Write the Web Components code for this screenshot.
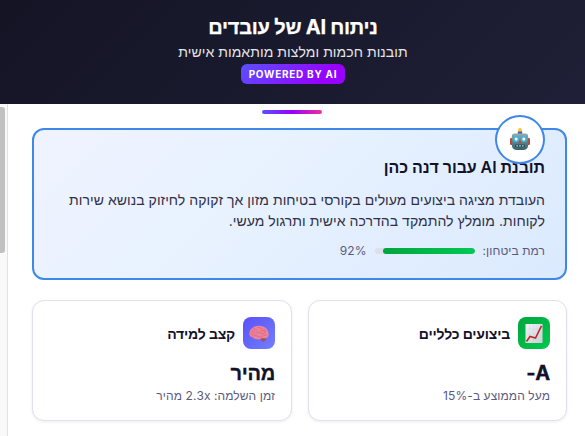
<!DOCTYPE html>
<html lang="he" dir="rtl">
<head>
<meta charset="utf-8">
<title>ניתוח AI של עובדים</title>
<style>
html,body{margin:0;height:100%;overflow:hidden;background:#fff}
body{font-family:Inter,"Liberation Sans",sans-serif;color:#12122a}
</style>
</head>
<body>
<script>
const define = (name, html) => {
  const t = document.createElement('template');
  t.innerHTML = html;
  customElements.define(name, class extends HTMLElement {
    constructor() {
      super();
      this.attachShadow({mode: 'open'}).append(t.content.cloneNode(true));
    }
  });
};

define('ai-header', `<style>
:host{display:flex;flex-direction:column;align-items:center;box-sizing:border-box;height:104px;padding:14px 0 0 1px;background:linear-gradient(135deg,#141425,#1f2037);color:#fff;flex:none}
h1{margin:0;font-size:20px;line-height:26px;font-weight:700;letter-spacing:-.25px;-webkit-text-stroke:.25px}
p{margin:2px 0 0;font-size:14px;line-height:20px;color:#e4e4e8;letter-spacing:.06px}
span{margin-top:2px;height:20px;box-sizing:border-box;padding:0 8px;border-radius:6px;background:linear-gradient(135deg,#5b50ff,#9800ff 80%);font-size:10px;line-height:20px;font-weight:700;letter-spacing:.73px;direction:ltr}
</style><h1><slot name="title"></slot></h1><p><slot name="sub"></slot></p><span><slot name="badge"></slot></span>`);

define('ai-scrollbar', `<style>
:host{display:block;box-sizing:border-box;width:8px;flex:none;background:#f9f9f9;border-right:1px solid #e2e2e2;padding-top:3px}
div{width:5px;height:146px;background:#c1c1c1;border-radius:0 3px 3px 0;margin-right:auto}
</style><div></div>`);

define('ai-app', `<style>
:host{display:flex;flex-direction:column;height:436px}
.row{display:flex;flex:1;min-height:0}
main{flex:1;min-width:0;padding:6px 18px 0 24px}
.accent{width:60px;height:4px;border-radius:2px;margin:0 245px 14px 0;background:linear-gradient(90deg,#5b50ff,#9800ff 50%,#f0309a)}
</style><slot name="header"></slot><div class="row"><main><div class="accent"></div><slot></slot></main><slot name="scroll"></slot></div>`);

define('ai-insight', `<style>
:host{display:block;position:relative;box-sizing:border-box;height:152px;border:2px solid #4088e8;border-radius:12px;padding:25px 20px 0;background:linear-gradient(135deg,#f0f3ff 0%,#e8f2ff 40%,#dbeafe 100%)}
.face{position:absolute;right:20px;top:-15px;width:50px;height:49px;box-sizing:border-box;border:2px solid #4088e8;border-radius:50%;background:#fff;display:grid;place-items:center}
h2{margin:0;font-size:16px;line-height:24px;font-weight:600;letter-spacing:-.08px}
p{margin:10px 0 0;font-size:14px;line-height:21px;color:#303048;letter-spacing:.045px}
</style><h2><slot name="title"></slot></h2><p><slot></slot></p><slot name="meter"></slot><div class="face"><slot name="icon"></slot></div>`);

define('ai-meter', `<style>
:host{display:flex;align-items:center;gap:8px;margin-top:11px;font-size:12px;line-height:18px;color:#5a5a7e;letter-spacing:.07px}
.t{width:100px;height:6px;border-radius:3px;background:#dfdfe9;overflow:hidden}
.f{width:92%;height:6px;border-radius:3px;background:linear-gradient(90deg,#00a63e,#00c853)}
</style><span><slot></slot></span><div class="t"><div class="f"></div></div><span><slot name="value"></slot></span>`);

define('ai-grid', `<style>:host{display:grid;grid-template-columns:259px 260px;gap:16px;margin-top:20px}</style><slot></slot>`);

define('ai-card', `<style>
:host{display:block;box-sizing:border-box;height:121px;border:1px solid #e0e0f0;border-radius:12px;background:#fff;padding:16px;box-shadow:0 1px 3px rgba(20,20,50,.08)}
.h{display:flex;align-items:center;gap:8px;font-size:14px;line-height:20px;font-weight:600;letter-spacing:-.18px}
.h>span{padding-top:2px}
.i{width:32px;height:32px;border-radius:8px;background:var(--tile);display:grid;place-items:center}
.v{font-size:20px;line-height:24px;font-weight:700;margin-top:12px;letter-spacing:-.25px;-webkit-text-stroke:.3px}
.s{font-size:12px;line-height:18px;color:#5a5a7e;margin-top:2px;letter-spacing:.08px}
</style><div class="h"><div class="i"><slot name="icon"></slot></div><span><slot name="label"></slot></span></div><div class="v"><slot name="value"></slot></div><div class="s"><slot></slot></div>`);

define('icon-robot', `<style>:host{display:block;width:20px;height:22px;margin-top:-2px}svg{display:block}</style>
<svg width="20" height="22" viewBox="0 0 22 22" preserveAspectRatio="none">
<defs><linearGradient id="m" x2="0" y2="1"><stop stop-color="#8fb0b2"/><stop offset=".5" stop-color="#5b868c"/><stop offset="1" stop-color="#38616b"/></linearGradient></defs>
<rect x="0" y="10" width="3.500" height="7" rx="1.300" fill="#c0423d"/><rect x="18.500" y="10" width="3.500" height="7" rx="1.300" fill="#c0423d"/>
<circle cx="11" cy="2.200" r="2.200" fill="#f8c832"/><path d="M8.500 3.500h5v2.500h-5z" fill="#5a55a8"/>
<path d="M4.500 5.500h13q2.500 0 2.500 2.500v8.500q0 5-5 5.500H7q-5-.5-5-5.500V8q0-2.500 2.500-2.500z" fill="url(#m)"/>
<circle cx="6.800" cy="11" r="3.200" fill="#45b4dc"/><circle cx="15.200" cy="11" r="3.200" fill="#45b4dc"/><circle cx="6.800" cy="11" r="1.600" fill="#fff"/><circle cx="15.200" cy="11" r="1.600" fill="#fff"/>
<path d="M11 11.500l1.800 3.500H9.200z" fill="#d43c36"/><rect x="5.500" y="16.500" width="11" height="2.700" rx="1" fill="#294b55"/><path d="M7 17.800h1.700m1.400 0h1.800m1.400 0h1.700" stroke="#c2d8da" stroke-width="1.200"/>
</svg>`);

define('icon-chart', `<style>:host{display:block;width:20px;height:20px}svg{display:block}</style>
<svg width="20" height="20" viewBox="0 0 20 20"><defs><linearGradient id="g" x2="1" y2="1"><stop stop-color="#f0f1f5"/><stop offset="1" stop-color="#c8cfd8"/></linearGradient></defs>
<rect x="1.500" y="1" width="17" height="19" fill="url(#g)"/><path d="M5.500 1v19M9.500 1v19M13.500 1v19M1.500 6h17M1.500 11h17M1.500 16h17" stroke="#cbd2dc" stroke-width=".3"/>
<path d="M2.500 18.500L6 13.500l5.500 1.500L17.500 2.800" fill="none" stroke="#c02a26" stroke-width="1.600"/></svg>`);

define('icon-brain', `<style>:host{display:block;width:20px;height:18px;margin-top:2px}svg{display:block}</style>
<svg width="20" height="18" viewBox="0 0 20 18">
<path d="M11 12l5-.5q1.500 2 .8 3.500-1.500 2-4 1.500z" fill="#a64f61"/>
<path d="M.3 8.500Q.5 4.500 4 2.500 8-.2 12.500 1q5 .8 6.700 5.500 1.400 4.500-1 6.200-2.200 1-5 .3-2 2-5.200 1.300Q5 14.300 4 12.500.3 12 .3 8.500z" fill="#ee8299"/>
<path d="M2 8q1-3 3.500-2.500M5 3.500q2 0 3 2M9 2.500q3-.5 4 2M15 4q2 1 1.500 3M7 8q2-2 4 0t5 0M4 11q3-1.500 5 .5t5-.5M2.500 10q2-1 3-2.500M12 6q2-1.500 3.500 0M15 10.500q2 .3 3-1" fill="none" stroke="#cf6580" stroke-width=".7" stroke-linecap="round"/></svg>`);
</script>
<ai-app>
  <ai-header slot="header"><span slot="title">ניתוח AI של עובדים</span><span slot="sub">תובנות חכמות ומלצות מותאמות אישית</span><span slot="badge">POWERED BY AI</span></ai-header>
  <ai-insight>
    <icon-robot slot="icon"></icon-robot>
    <span slot="title">תובנת AI עבור דנה כהן</span>
    העובדת מציגה ביצועים מעולים בקורסי בטיחות מזון אך זקוקה לחיזוק בנושא שירות לקוחות. מומלץ להתמקד בהדרכה אישית ותרגול מעשי.
    <ai-meter slot="meter">רמת ביטחון:<span slot="value">92%</span></ai-meter>
  </ai-insight>
  <ai-grid>
    <ai-card style="--tile:linear-gradient(135deg,#00a63e,#00c950)"><icon-chart slot="icon"></icon-chart><span slot="label">ביצועים כלליים</span><span slot="value">A-</span>מעל הממוצע ב-15%</ai-card>
    <ai-card style="--tile:linear-gradient(135deg,#5b50fa,#7080ff)"><icon-brain slot="icon"></icon-brain><span slot="label">קצב למידה</span><span slot="value">מהיר</span>זמן השלמה: 2.3x מהיר</ai-card>
  </ai-grid>
  <ai-scrollbar slot="scroll"></ai-scrollbar>
</ai-app>
</body>
</html>
